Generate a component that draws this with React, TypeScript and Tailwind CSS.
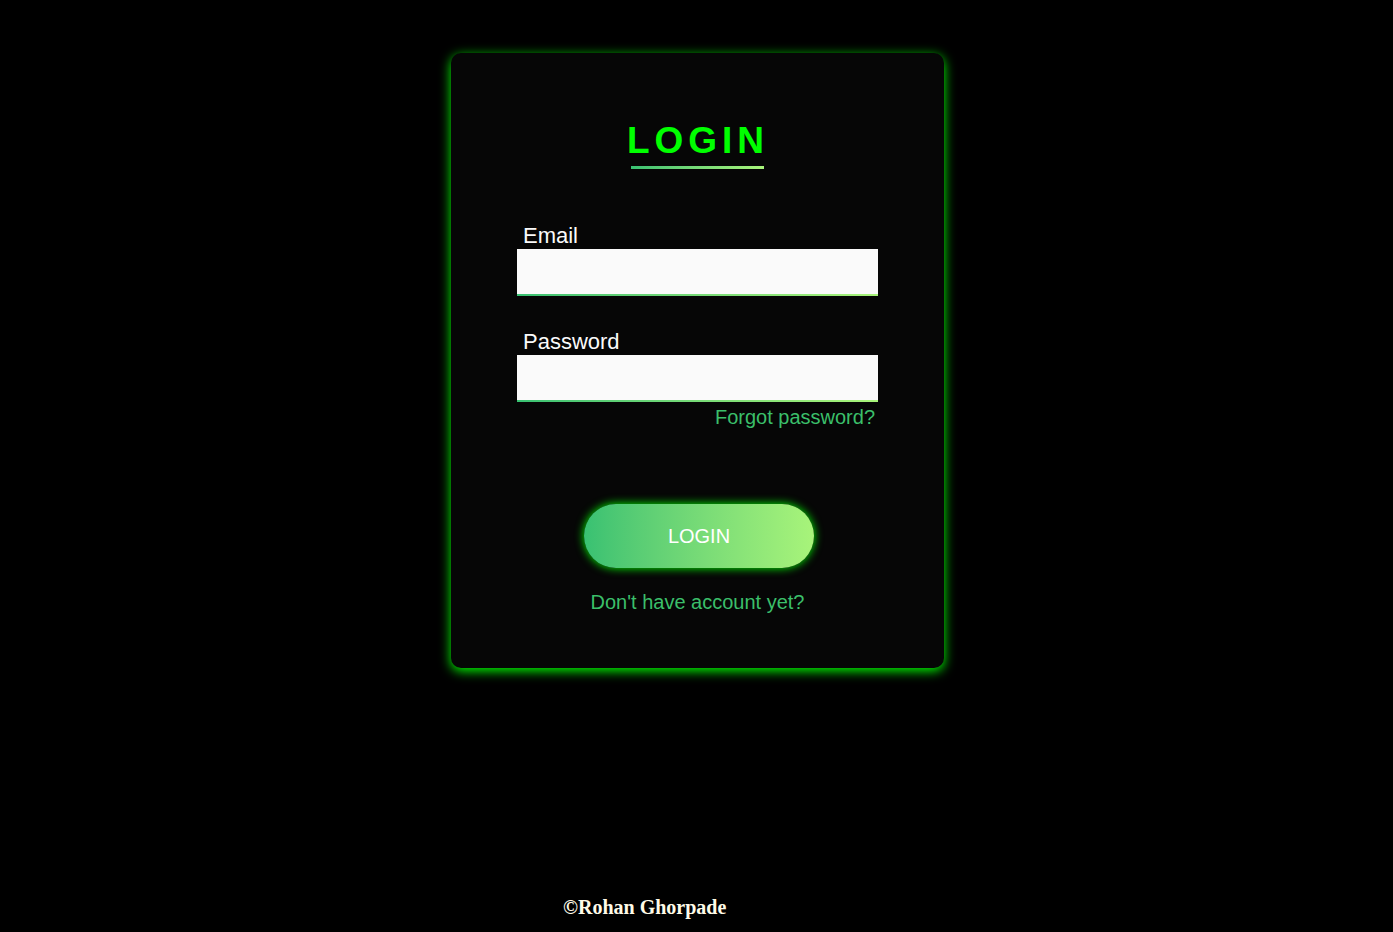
export default function App() {
  return (
    <div className="min-h-[932px] w-full bg-black flex flex-col" style={{ fontFamily: '"Liberation Sans", Arial, sans-serif' }}>
      <div className="flex justify-center pl-[2px]">
        <div className="mt-[53px] w-[493px] h-[615px] rounded-[10px] bg-[#060606] shadow-[0_3px_12px_#00ff00] flex flex-col items-center">
          <div className="mt-[67px] flex flex-col items-center">
            <h1 className="text-[37px] leading-[42px] font-bold tracking-[5px] text-[#00ff00] pl-[1px]">LOGIN</h1>
            <div className="mt-[4px] w-[133px] h-[3px] bg-gradient-to-r from-[#38c172] to-[#a8f47a]" />
          </div>

          <div className="mt-[53px] w-[361px] flex flex-col">
            <label className="pt-[1px] pl-[6px] text-[22px] leading-[25px] text-[#fafafa]">Email</label>
            <div className="mt-[1px] h-[47px] bg-gradient-to-r from-[#38c172] to-[#a8f47a] pb-[2px]">
              <div className="h-full bg-[#fafafa]" />
            </div>

            <label className="mt-[32px] pt-[1px] pl-[6px] text-[22px] leading-[25px] text-[#fafafa]">Password</label>
            <div className="mt-[1px] h-[47px] bg-gradient-to-r from-[#38c172] to-[#a8f47a] pb-[2px]">
              <div className="h-full bg-[#fafafa]" />
            </div>
            <div className="mt-[4px] text-right pr-[3px] text-[20px] leading-[23px] text-[#3bbf6a]">Forgot password?</div>
          </div>

          <button className="mt-[75px] ml-[3px] w-[230px] h-[64px] rounded-full bg-gradient-to-r from-[#38c172] to-[#a8f47a] shadow-[0_0_10px_#00ff00] text-white text-[20px] leading-[23px]">
            LOGIN
          </button>
          <div className="mt-[23px] text-[20px] leading-[23px] text-[#3bbf6a]">Don't have account yet?</div>
        </div>
      </div>

      <div className="mt-[228px] pl-[563px] text-[20px] leading-[23px] font-bold text-[#fffbe8]" style={{ fontFamily: '"Liberation Serif", "Times New Roman", serif' }}>
        ©Rohan Ghorpade
      </div>
    </div>
  );
}
